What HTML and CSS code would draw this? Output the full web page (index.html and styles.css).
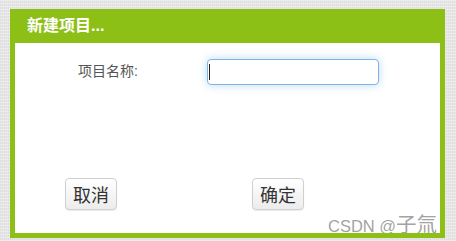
FILE: index.html
```html
<!DOCTYPE html>
<html lang="zh">
<head>
<meta charset="utf-8">
<link rel="stylesheet" href="styles.css">
</head>
<body>
<div class="dialog">
  <div class="dialog-header">新建项目...</div>
  <div class="dialog-body">
    <div class="form-row">
      <label class="form-label" for="name">项目名称:</label>
      <span class="input-wrap">
        <input class="form-input" id="name" type="text">
        <span class="caret"></span>
      </span>
    </div>
    <div class="actions">
      <button class="btn">取消</button>
      <button class="btn">确定</button>
    </div>
    <div class="watermark"><span class="wm-latin">CSDN @</span><span class="wm-cjk">子氚</span></div>
  </div>
</div>
</body>
</html>
```

FILE: styles.css
```css
html, body {
  margin: 0;
  padding: 0;
}
body {
  width: 456px;
  height: 241px;
  overflow: hidden;
  background-color: #e6e6e6;
  background-image:
    repeating-linear-gradient(0deg, rgba(255,255,255,0.35) 0 1px, transparent 1px 3px),
    repeating-linear-gradient(90deg, rgba(0,0,0,0.03) 0 1px, transparent 1px 2px);
  font-family: "Liberation Sans", "Noto Sans CJK SC", sans-serif;
  padding-top: 9px;
  padding-left: 10px;
  box-sizing: border-box;
}
.dialog {
  width: 435px;
  box-sizing: border-box;
  border: 5px solid #8dc016;
  border-top: 0;
  background: #fff;
}
.dialog-header {
  background: #8dc016;
  height: 34px;
  margin: 0 -5px;
  padding-left: 17px;
  color: #fff;
  font-weight: bold;
  font-size: 16px;
  line-height: 34px;
}
.dialog-body {
  position: relative;
  height: 190px;
  overflow: hidden;
  padding: 16px 0 0 0;
  box-sizing: border-box;
}
.form-row {
  display: flex;
  align-items: center;
  padding-left: 63px;
}
.form-label {
  width: 129px;
  font-size: 14px;
  color: #555;
  margin-top: -5px;
}
.input-wrap {
  position: relative;
  display: block;
}
.form-input {
  display: block;
  width: 172px;
  height: 26px;
  box-sizing: border-box;
  border: 1px solid #7eb5e8;
  border-radius: 4px;
  box-shadow: 0 0 8px rgba(102, 175, 233, 0.45);
  outline: none;
  padding: 0 2px;
  font-size: 14px;
}
.caret {
  position: absolute;
  left: 2px;
  top: 5px;
  width: 1px;
  height: 16px;
  background: #222;
}
.actions {
  display: flex;
  gap: 135px;
  padding-left: 50px;
  margin-top: 93px;
}
.btn {
  width: 52px;
  height: 32px;
  box-sizing: border-box;
  border: 1px solid #cfcfcf;
  border-radius: 4px;
  background: linear-gradient(#ffffff, #ececec);
  box-shadow: 0 1px 1px rgba(0,0,0,0.08);
  font-family: "Liberation Sans", "Noto Sans CJK SC", sans-serif;
  font-size: 18px;
  color: #333;
  padding: 0;
}
.watermark {
  position: absolute;
  left: 313px;
  top: 170px;
  white-space: nowrap;
  line-height: 20px;
  color: rgba(150, 150, 150, 0.9);
}
.wm-latin {
  font-family: "Liberation Sans", sans-serif;
  font-size: 16.5px;
  line-height: 20px;
}
.wm-cjk {
  font-family: "Noto Sans CJK SC", sans-serif;
  font-size: 20.5px;
  line-height: 20px;
}
```
